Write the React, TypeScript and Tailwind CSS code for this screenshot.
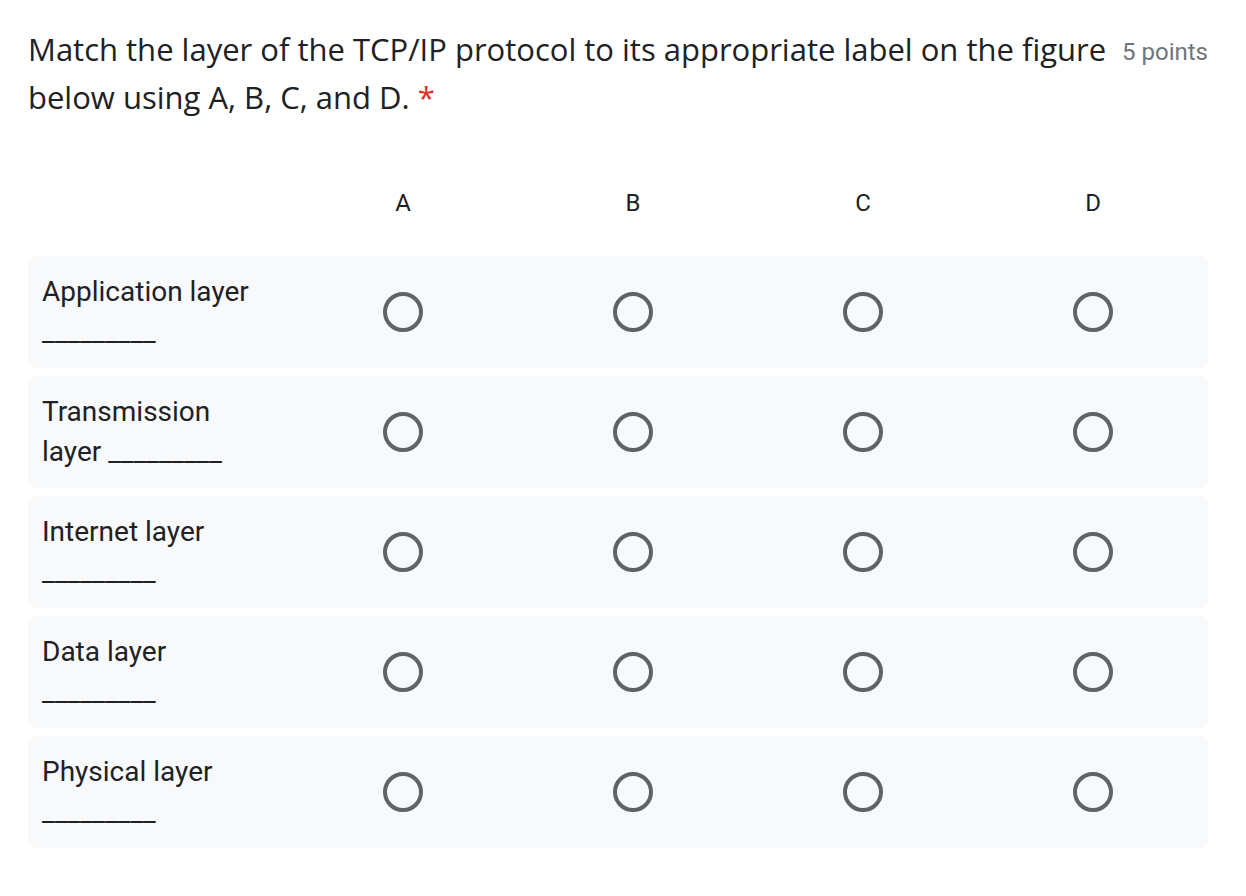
const columns = ["A", "B", "C", "D"];

const rows = [
  "Application layer _________",
  "Transmission layer _________",
  "Internet layer _________",
  "Data layer _________",
  "Physical layer _________",
];

function Radio() {
  return (
    <span className="block h-[40px] w-[40px] rounded-full border-[4px] border-[#5f6368]" />
  );
}

export default function App() {
  return (
    <div className="min-h-[896px] bg-white">
      <div className="ml-[28px] w-[1180px] pt-[25px] pb-[48px]">
        <div className="flex items-start justify-between">
          <h1 className="w-[1088px] font-['Open_Sans',sans-serif] text-[31px] leading-[48px] font-normal text-[#202124]">
            Match the layer of the TCP/IP protocol to its appropriate label on the figure below
            using A, B, C, and D. <span className="text-[#d93025]">*</span>
          </h1>
          <span className="pt-[11px] font-['Roboto',sans-serif] text-[24px] leading-[32px] text-[#70757a]">
            5 points
          </span>
        </div>

        <div className="mt-[70px] grid grid-cols-[260px_repeat(4,230px)] font-['Roboto',sans-serif] text-[24px] leading-[24px] text-[#202124]">
          <div />
          {columns.map((c) => (
            <div key={c} className="text-center">
              {c}
            </div>
          ))}
        </div>

        <div className="mt-[41px] flex flex-col gap-[8px]">
          {rows.map((label) => (
            <div
              key={label}
              className="grid grid-cols-[260px_repeat(4,230px)] items-center rounded-[8px] bg-[#f8f9fa]"
            >
              <div className="py-[16px] pl-[14px] pr-[24px] font-['Roboto',sans-serif] text-[28px] leading-[40px] text-[#202124]">
                {label}
              </div>
              {columns.map((c) => (
                <div key={c} className="flex justify-center">
                  <Radio />
                </div>
              ))}
            </div>
          ))}
        </div>
      </div>
    </div>
  );
}
